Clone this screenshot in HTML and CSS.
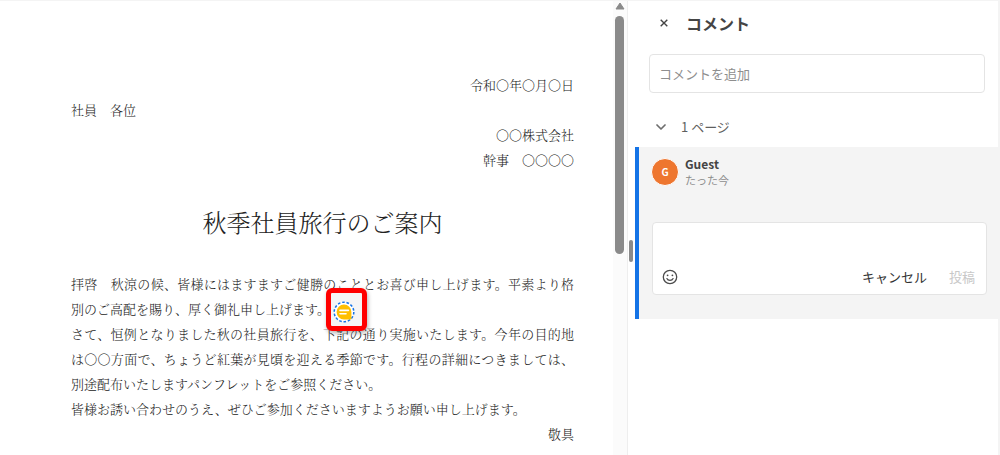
FILE: index.html
```html
<!DOCTYPE html>
<html lang="ja">
<head>
<meta charset="utf-8">
<title>コメント</title>
<link rel="stylesheet" href="styles.css">
</head>
<body>
<div class="viewer">
  <main class="document">
    <article class="page">
      <p class="line line-right">令和〇年〇月〇日</p>
      <p class="line">社員　各位</p>
      <p class="line line-right">〇〇株式会社</p>
      <p class="line line-right">幹事　〇〇〇〇</p>
      <h1 class="page-title">秋季社員旅行のご案内</h1>
      <p class="line">拝啓　秋涼の候、皆様にはますますご健勝のこととお喜び申し上げます。平素より格別のご高配を賜り、厚く御礼申し上げます。<span class="anchor"><button class="note" type="button" aria-label="ノート注釈"><svg class="note-icon" viewBox="0 0 22 22" aria-hidden="true"><circle cx="11" cy="11" r="9.8" fill="#fff" stroke="#1473e6" stroke-width="1.5" stroke-dasharray="2.6 1.8"/><path d="M11 3.6a7.4 7.4 0 0 1 7.4 7.4v6.4a1 1 0 0 1-1 1H11A7.4 7.4 0 0 1 11 3.6z" fill="#ffbf00"/><path d="M7 9.4h8.4M7 12.7h6" stroke="#fff" stroke-width="1.6" stroke-linecap="round"/></svg></button></span></p>
      <p class="line">さて、恒例となりました秋の社員旅行を、下記の通り実施いたします。今年の目的地は〇〇方面で、ちょうど紅葉が見頃を迎える季節です。行程の詳細につきましては、別途配布いたしますパンフレットをご参照ください。</p>
      <p class="line">皆様お誘い合わせのうえ、ぜひご参加くださいますようお願い申し上げます。</p>
      <p class="line line-right">敬具</p>
    </article>
    <div class="scrollbar">
      <svg class="scroll-arrow" viewBox="0 0 10 8" aria-hidden="true"><path d="M5 1L9 7H1z" fill="#8a8a8a" stroke="#8a8a8a" stroke-linejoin="round"/></svg>
      <div class="scroll-thumb"></div>
    </div>
  </main>
  <aside class="panel" aria-label="コメント">
    <div class="grip"></div>
    <header class="panel-head">
      <button class="close" type="button" aria-label="閉じる"><svg viewBox="0 0 8 8" aria-hidden="true"><path d="M.7.7l6.6 6.6M7.3.7L.7 7.3" stroke="#444" stroke-width="1.4" fill="none"/></svg></button>
      <h2 class="panel-title">コメント</h2>
    </header>
    <input class="add" type="text" placeholder="コメントを追加" aria-label="コメントを追加">
    <button class="group" type="button"><svg class="chevron" viewBox="0 0 10 6" aria-hidden="true"><path d="M1 1l4 4 4-4" stroke="#6e6e6e" stroke-width="1.7" fill="none" stroke-linecap="round" stroke-linejoin="round"/></svg><span>1 ページ</span></button>
    <section class="thread">
      <div class="author">
        <span class="avatar">G</span>
        <div class="meta">
          <span class="name">Guest</span>
          <span class="time">たった今</span>
        </div>
      </div>
      <form class="reply">
        <textarea class="reply-text" aria-label="コメント"></textarea>
        <div class="actions">
          <button class="emoji" type="button" aria-label="絵文字"><svg viewBox="0 0 16 16" aria-hidden="true"><circle cx="8" cy="8" r="6.7" fill="none" stroke="#4b4b4b" stroke-width="1.3"/><circle cx="5.6" cy="6.3" r=".9" fill="#4b4b4b"/><circle cx="10.4" cy="6.3" r=".9" fill="#4b4b4b"/><path d="M4.9 9.6c1 2.4 5.2 2.4 6.2 0" fill="none" stroke="#4b4b4b" stroke-width="1.2" stroke-linecap="round"/></svg></button>
          <button class="action" type="button">キャンセル</button>
          <button class="action" type="submit" disabled>投稿</button>
        </div>
      </form>
    </section>
  </aside>
</div>
</body>
</html>
```
FILE: styles.css
```css
* { box-sizing: border-box; }
body {
  margin: 0;
  background: #fff;
  color: #444;
  font: 13px/20px "Noto Sans CJK JP", sans-serif;
}
p, h1, h2 { margin: 0; }
button {
  padding: 0;
  border: 0;
  background: none;
  color: inherit;
  font: inherit;
}
svg { display: block; }

.viewer {
  display: flex;
  height: 100vh;
  overflow: hidden;
  border-top: 1px solid #f4f4f4;
  border-right: 2px solid #f4f4f4;
}

.document {
  display: flex;
  flex: 1;
  min-width: 0;
}
.page {
  flex: 1;
  padding: 71px 39px 0 71px;
  color: #222;
  font-family: "Noto Serif CJK JP", "Noto Sans CJK JP", serif;
  font-weight: 300;
}
.line {
  line-height: 25px;
  text-align: justify;
}
.line-right { text-align: right; }
.page-title {
  padding: 30px 0;
  font-size: 24px;
  font-weight: 300;
  line-height: 39px;
  text-align: center;
}
.anchor { position: relative; }
.note {
  position: absolute;
  top: -11px;
  left: -4px;
  display: grid;
  place-items: center;
  width: 41px;
  height: 43px;
  padding: 5px 4px 0 0;
  border: 5px solid #f00;
  border-radius: 6px;
  background: #f5f5f5;
  box-shadow: 1px 2px 4px rgba(0, 0, 0, .3);
}
.note-icon { width: 22px; height: 22px; }

.scrollbar {
  width: 15px;
  padding: 1px 2px;
  background: #fbfbfb;
  border-right: 1px solid #eee;
}
.scroll-arrow { width: 10px; height: 8px; }
.scroll-thumb {
  width: 9px;
  height: 238px;
  margin-top: 6px;
  border-radius: 5px;
  background: #8a8a8a;
}

.panel {
  position: relative;
  display: flex;
  flex-direction: column;
  flex: 0 0 370px;
}
.grip {
  position: absolute;
  top: 239px;
  left: 1px;
  width: 4px;
  height: 22px;
  border-radius: 2px;
  background: #8a8a8a;
}
.panel-head {
  display: flex;
  align-items: center;
  gap: 18px;
  padding: 9px 32px 18px;
}
.close svg { width: 8px; height: 8px; }
.panel-title {
  font-size: 16px;
  line-height: 26px;
  color: #444;
}
.add {
  height: 39px;
  margin: 0 13px 0 21px;
  padding: 0 9px;
  border: 1px solid #e4e4e4;
  border-radius: 4px;
  font: inherit;
}
.add::placeholder { color: #8e8e8e; }
.group {
  display: flex;
  align-items: center;
  gap: 15px;
  padding: 24px 28px 10px;
  color: #5f5f5f;
}
.chevron { width: 10px; height: 6px; }

.thread {
  margin-left: 7px;
  padding: 9px 11px 24px 13px;
  border-left: 4px solid #1473e6;
  background: #f4f4f4;
}
.author {
  display: flex;
  align-items: center;
  gap: 6px;
}
.avatar {
  width: 28px;
  height: 28px;
  margin-left: -1px;
  border: 1px solid #fff;
  border-radius: 50%;
  background: #ee762f;
  color: #fff;
  font-size: 10px;
  font-weight: 700;
  line-height: 25px;
  text-align: center;
}
.meta {
  display: flex;
  flex-direction: column;
  line-height: 16px;
}
.name {
  font-size: 12px;
  font-weight: 700;
}
.time {
  color: #8e8e8e;
  font-size: 11px;
}
.reply {
  margin-top: 34px;
  border: 1px solid #e4e4e4;
  border-radius: 4px;
  background: #fff;
}
.reply-text {
  display: block;
  width: 100%;
  height: 44px;
  padding: 10px;
  border: 0;
  background: none;
  font: inherit;
  resize: none;
}
.actions {
  display: flex;
  align-items: center;
  gap: 22px;
  padding: 0 11px 7px 9px;
}
.emoji { margin-right: auto; }
.emoji svg { width: 16px; height: 16px; }
.action { color: #333; }
.action:disabled { color: #c8c8c8; }
```
